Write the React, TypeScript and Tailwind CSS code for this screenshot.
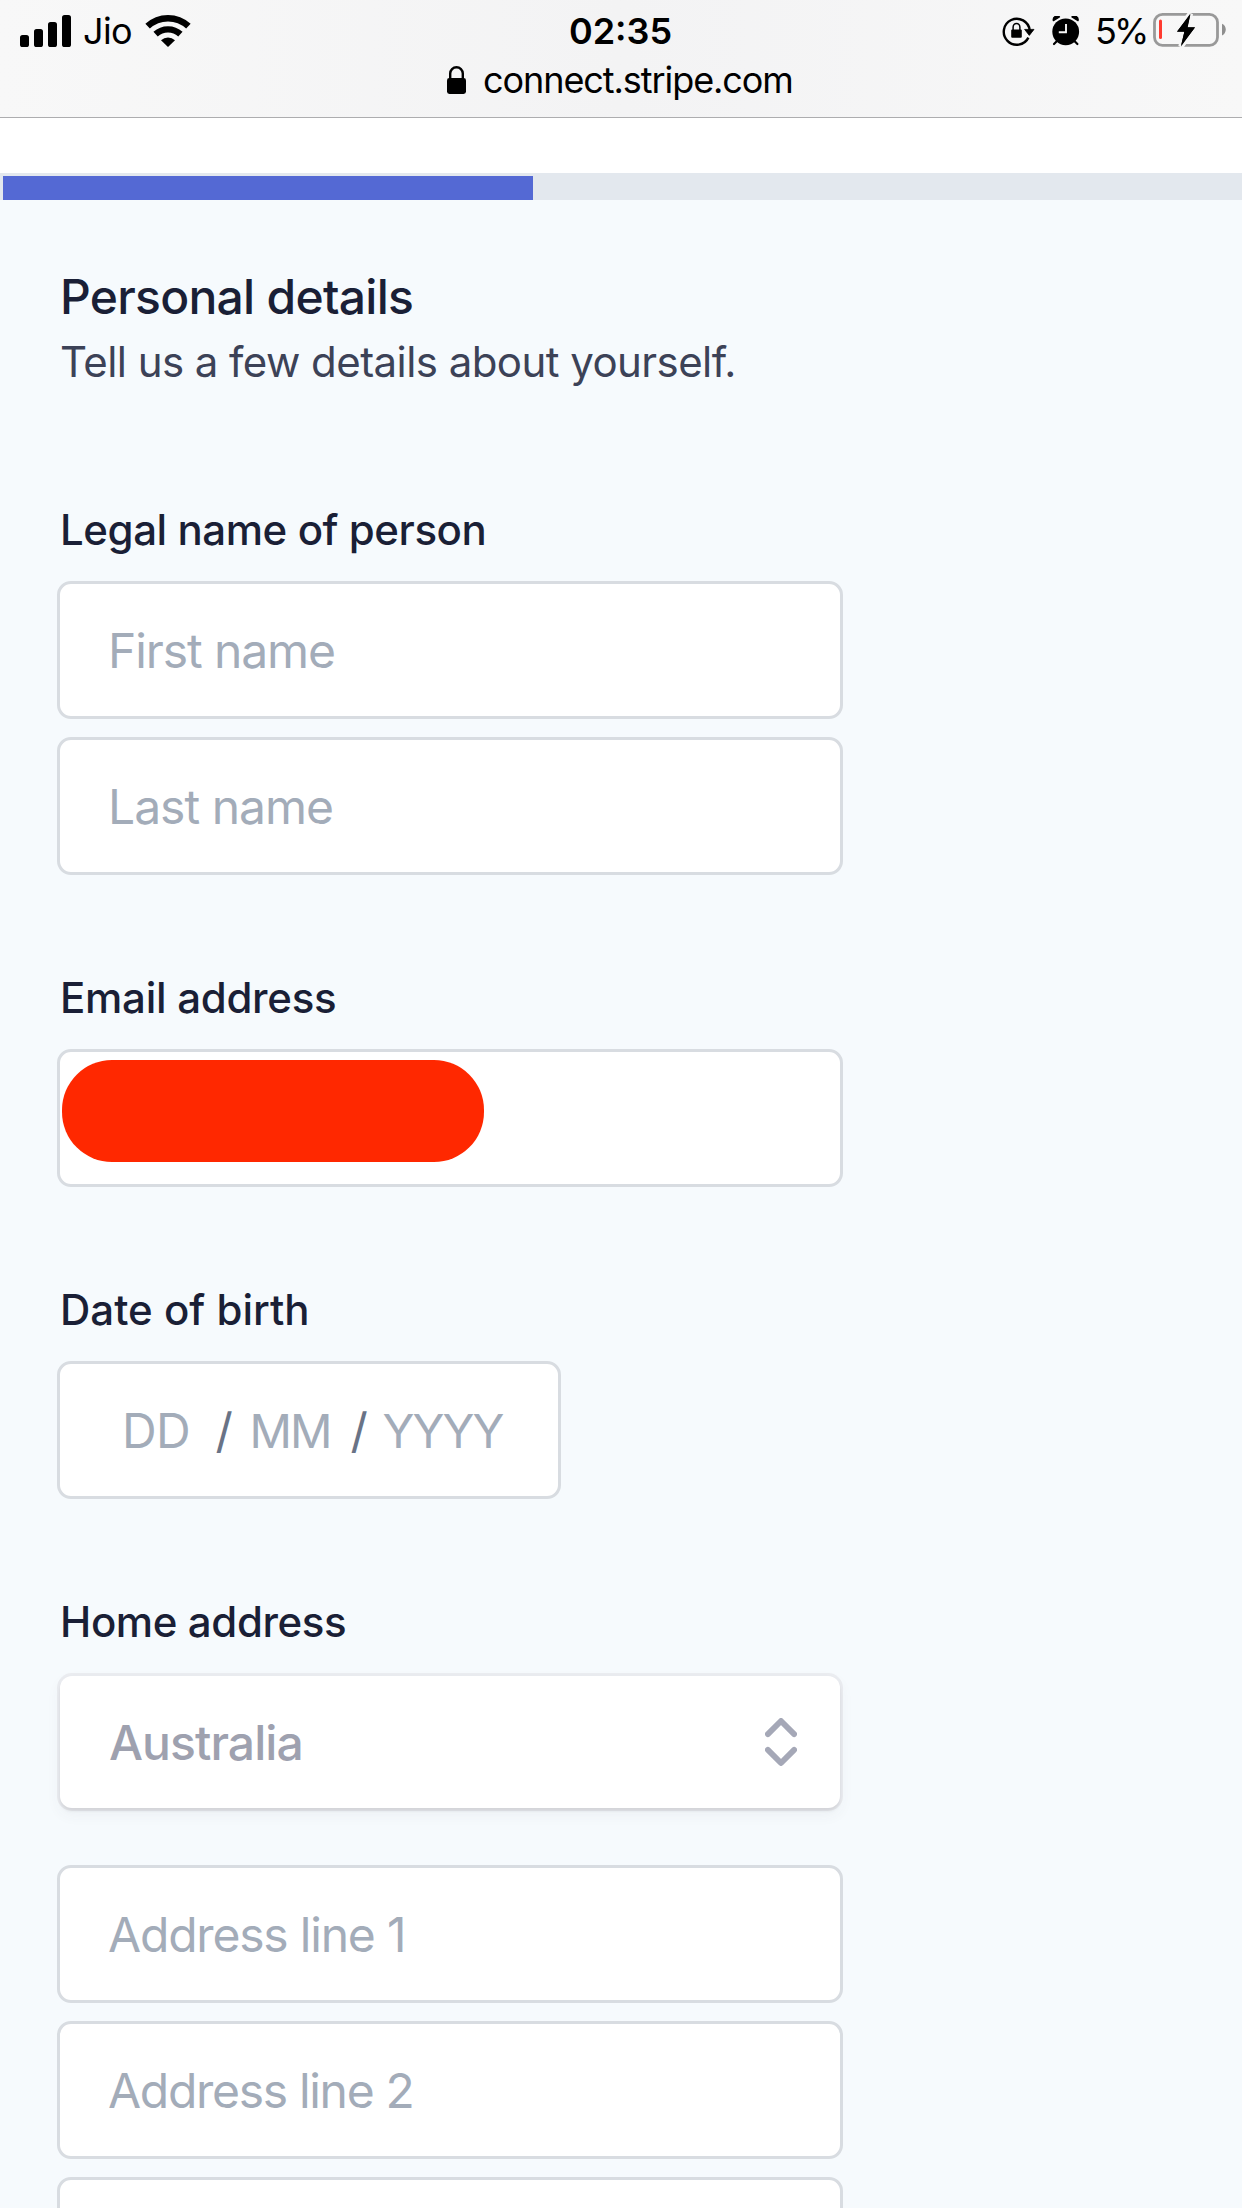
import React from "react";

function SignalIcon() {
  return (
    <svg className="block h-[32px] w-[51px] shrink-0" viewBox="0 0 51 32" fill="#000">
      <rect x="0" y="20" width="9" height="12" rx="2.6" />
      <rect x="14" y="14" width="9" height="18" rx="2.6" />
      <rect x="28" y="7" width="9" height="25" rx="2.6" />
      <rect x="42" y="0" width="9" height="32" rx="2.6" />
    </svg>
  );
}

function WifiIcon() {
  return (
    <svg className="block h-[33px] w-[46px] shrink-0" viewBox="0 0 46 33" fill="none">
      <path d="M2.6 12.2 A30 30 0 0 1 43.4 12.2" stroke="#000" strokeWidth="6.6" />
      <path d="M10.6 20.2 A18.4 18.4 0 0 1 35.4 20.2" stroke="#000" strokeWidth="6.4" />
      <path d="M16 26.2 A10.6 10.6 0 0 1 30 26.2 L23 33 Z" fill="#000" />
    </svg>
  );
}

function LockIcon() {
  return (
    <svg className="block h-[28px] w-[19px] shrink-0" viewBox="0 0 19 28">
      <path d="M3.2 13 V7.6 a6.3 6.3 0 0 1 12.6 0 V13" fill="none" stroke="#000" strokeWidth="2.4" />
      <rect x="0" y="12" width="19" height="16" rx="2.4" fill="#000" />
    </svg>
  );
}

function RotationLockIcon() {
  return (
    <svg className="block h-[30px] w-[33px] shrink-0" viewBox="0 0 33 30">
      <path d="M27.5 14 A13 13 0 1 0 26.2 21.3" transform="translate(0.2 0.3)" fill="none" stroke="#000" strokeWidth="2.4" />
      <path d="M22.6 13.4 H32 L27.3 19.4 Z" fill="#000" stroke="#000" strokeWidth="0.8" strokeLinejoin="round" />
      <path d="M11.1 14 V11.2 a3.4 3.7 0 0 1 6.8 0 V14" fill="none" stroke="#000" strokeWidth="1.5" />
      <rect x="9.2" y="13.4" width="10.6" height="8.4" rx="1" fill="#000" />
    </svg>
  );
}

function AlarmIcon() {
  return (
    <svg className="block h-[30px] w-[28px] shrink-0" viewBox="0 0 28 30">
      <circle cx="13.7" cy="15.8" r="13.4" fill="#000" />
      <path d="M0 7 L9 0 M27.4 7 L18.4 0" stroke="#f7f7f7" strokeWidth="2" />
      <path d="M1.4 4.6 A3.7 3.7 0 0 1 7.4 0.9 Z" fill="#000" stroke="#000" strokeWidth="1.4" strokeLinejoin="round" />
      <path d="M26 4.6 A3.7 3.7 0 0 0 20 0.9 Z" fill="#000" stroke="#000" strokeWidth="1.4" strokeLinejoin="round" />
      <path d="M5 25 L2 28 M22.4 25 L25.4 28" stroke="#000" strokeWidth="2.2" strokeLinecap="round" />
      <path d="M14 8 V16.2 H6.8" fill="none" stroke="#f7f7f7" strokeWidth="1.9" />
    </svg>
  );
}

function BatteryIcon() {
  return (
    <svg className="block h-[36px] w-[73px] shrink-0" viewBox="0 0 73 36">
      <rect x="1.5" y="2.3" width="63" height="31" rx="8" fill="none" stroke="#999999" strokeWidth="2.8" />
      <path d="M69 11.8 C74 13.6 74 21.4 69 23.4 Z" fill="#8f8f8f" />
      <rect x="6" y="7.6" width="3" height="19.4" rx="1.5" fill="#ff3b30" />
      <path
        d="M37.4 1.6 L24 19.8 H31.4 L28 34.6 L42 15.2 H34.4 Z"
        fill="#000"
        stroke="#f7f7f7"
        strokeWidth="5.4"
        paintOrder="stroke"
      />
      <path d="M37.4 2.4 L24 19.6 H31.4 L28 33.6 L42 15.4 H34.6 Z" fill="#000" />
    </svg>
  );
}

function Header() {
  return (
    <header className="flex h-[118px] shrink-0 flex-col border-b border-[#adadaf] bg-linear-to-r from-[#f8f8f8] via-[#f3f3f4] to-[#f8f8f8] text-[36px] leading-none text-black">
      <div className="grid h-[62px] grid-cols-[1fr_auto_1fr] items-center">
        <div className="flex items-center pl-5">
          <SignalIcon />
          <span className="ml-3 w-[62px] tracking-[-0.63px]">Jio</span>
          <div className="pb-[2px]">
            <WifiIcon />
          </div>
        </div>
        <span className="pr-[1px] font-semibold">02:35</span>
        <div className="flex items-center justify-end pr-[16px]">
          <RotationLockIcon />
          <div className="ml-[17px]">
            <AlarmIcon />
          </div>
          <span className="ml-[15px] w-[58px] tracking-[-3px]">5%</span>
          <div className="pb-[2px]">
            <BatteryIcon />
          </div>
        </div>
      </div>
      <div className="flex h-[35px] items-center pl-[447px]">
        <LockIcon />
        <span className="ml-[17px] tracking-[-1.07px]">connect.stripe.com</span>
      </div>
    </header>
  );
}

function Label({ className = "", children }: { className?: string; children: React.ReactNode }) {
  return (
    <div className={`mb-[21px] ml-[3px] h-[60px] text-[42px] leading-[60px] font-medium text-[#1a1f36] ${className}`}>
      {children}
    </div>
  );
}

function Field({ className = "", children }: { className?: string; children?: React.ReactNode }) {
  return (
    <div
      className={`flex h-[138px] w-[786px] shrink-0 items-center rounded-[14px] border-[3px] border-[#d8dce1] bg-white pt-[2px] pl-[48px] text-[48px] leading-none whitespace-pre text-[#a3acb9] ${className}`}
    >
      {children}
    </div>
  );
}

function Chevrons() {
  return (
    <svg className="mr-[43px] ml-auto block h-[48px] w-[32px]" viewBox="0 0 32 48" fill="none" stroke="#a5a8b7" strokeWidth="5.8" strokeLinecap="round" strokeLinejoin="round">
      <path d="M2.9 16.1 L16 3 L29.1 16.1" />
      <path d="M2.9 31.9 L16 45 L29.1 31.9" />
    </svg>
  );
}

export default function App() {
  return (
    <div className="flex h-[2208px] w-[1242px] flex-col overflow-hidden bg-[#f6fafd] font-[Inter,sans-serif]">
      <Header />
      <div className="h-[55px] shrink-0 bg-white" />
      <div className="h-[27px] shrink-0 bg-[#e3e8ee] pt-[3px] pl-[3px]">
        <div className="h-6 w-[530px] bg-[#5469d4]" />
      </div>

      <main className="flex flex-col pt-[66px] pl-[57px]">
        <h1 className="ml-[3px] h-[60px] text-[48px] leading-[62px] font-medium tracking-[-0.73px] text-[#1a1f36]">
          Personal details
        </h1>
        <p className="mt-[6px] ml-[3px] h-[60px] text-[42px] leading-[60px] tracking-[-0.56px] text-[#3c4257]">
          Tell us a few details about yourself.
        </p>

        <section className="mt-[108px]">
          <Label className="tracking-[-0.43px]">Legal name of person</Label>
          <div className="flex flex-col gap-[18px]">
            <Field className="tracking-[-1.1px]">First name</Field>
            <Field className="tracking-[-1px]">Last name</Field>
          </div>
        </section>

        <section className="mt-[93px]">
          <Label className="tracking-[-0.28px]">Email address</Label>
          <div className="relative">
            <Field />
            <div className="absolute top-[11px] left-[5px] h-[102px] w-[422px] rounded-[50px] bg-[#ff2800]" />
          </div>
        </section>

        <section className="mt-[93px]">
          <Label>Date of birth</Label>
          <div className="flex h-[138px] w-[504px] items-center rounded-[14px] border-[3px] border-[#d8dce1] bg-white pt-[2px] pl-[62px] text-[48px] leading-none text-[#a3acb9]">
            <div className="flex items-baseline">
              <span className="w-[93.5px] tracking-[-0.64px]">DD</span>
              <span className="w-[34px] text-[#697386]">/</span>
              <span className="w-[101px] text-[47px] tracking-[-2px]">MM</span>
              <span className="w-[32px] text-[#697386]">/</span>
              <span className="text-[47px] tracking-[-1.9px]">YYYY</span>
            </div>
          </div>
        </section>

        <section className="mt-[93px]">
          <Label className="tracking-[-0.39px]">Home address</Label>
          <div className="p-[3px]">
            <div className="flex h-[132px] w-[780px] items-center rounded-[12px] bg-white pl-[49px] text-[48px] leading-none font-medium tracking-[-0.92px] text-[#9ea1af] shadow-[0_0_0_3px_rgba(60,40,50,0.06),0_3px_3px_rgba(0,0,0,0.07),0_6px_15px_rgba(60,66,87,0.06)]">
              <span className="pt-[2px]">Australia</span>
              <Chevrons />
            </div>
          </div>
          <div className="mt-[54px] flex flex-col gap-[18px]">
            <Field className="tracking-[-1.19px]">Address line 1</Field>
            <Field className="tracking-[-1.3px]">Address line 2</Field>
            <Field />
          </div>
        </section>
      </main>
    </div>
  );
}
